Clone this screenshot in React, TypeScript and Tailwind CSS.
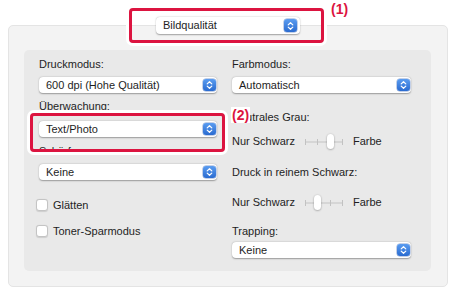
import React from 'react';

const red = 'border-[#dc1440]';

function Stepper({ big = false }: { big?: boolean }) {
  return (
    <div
      className={`flex items-center justify-center rounded-[3px] bg-gradient-to-b from-[#5a9cf0] to-[#2a6bd0] shadow-[0_0_0_0.5px_rgba(20,70,160,0.5)] ${
        big ? 'mr-[3px] h-[13px] w-[13px]' : 'mr-[1px] h-[12px] w-[13px]'
      }`}
    >
      <svg width="13" height="12" viewBox="0 0 13 12" fill="none">
        <path d="M4.2 4.9 L6.5 2.7 L8.8 4.9" stroke="white" strokeWidth="1.2" strokeLinecap="round" strokeLinejoin="round" />
        <path d="M4.2 7.1 L6.5 9.3 L8.8 7.1" stroke="white" strokeWidth="1.2" strokeLinecap="round" strokeLinejoin="round" />
      </svg>
    </div>
  );
}

function Popup({ value, className = '', big = false }: { value: string; className?: string; big?: boolean }) {
  return (
    <div
      className={`flex items-center justify-between rounded-[4px] bg-white pl-[7px] text-[11px] leading-[13px] text-[#1e1e1e] shadow-[0_0.5px_1.5px_rgba(0,0,0,0.35)] ${
        big ? 'h-[17px]' : 'h-[16px]'
      } ${className}`}
    >
      <span>{value}</span>
      <Stepper big={big} />
    </div>
  );
}

function Label({ text, className = '' }: { text: string; className?: string }) {
  return <div className={`text-[11px] leading-[13px] text-[#1e1e1e] ${className}`}>{text}</div>;
}

function Checkbox({ label, className = '' }: { label: string; className?: string }) {
  return (
    <div className={`flex h-[12px] items-center ${className}`}>
      <div className="ml-[-3px] h-[12px] w-[12px] rounded-[3px] border border-[#c4c4c4] bg-white shadow-[0_0.5px_1px_rgba(0,0,0,0.12)]" />
      <span className="ml-[5px] text-[11px] leading-[13px] text-[#1e1e1e]">{label}</span>
    </div>
  );
}

function Slider({ pos, className = '' }: { pos: number; className?: string }) {
  const ticks = [0, 12, 25, 37];
  return (
    <div className={`flex h-[15px] items-center ${className}`}>
      <span className="text-[11px] leading-[13px] text-[#1e1e1e]">Nur Schwarz</span>
      <div className="relative ml-[10px] h-[15px] w-[38px]">
        <div className="absolute left-0 right-0 top-[6.5px] h-[2px] bg-[#d6d6d6]" />
        {ticks.map((t) => (
          <div key={t} className="absolute top-[4.5px] h-[6px] w-px bg-[#c2c2c2]" style={{ left: t }} />
        ))}
        <div
          className="absolute top-0 h-[15px] w-[7px] rounded-full bg-white shadow-[0_0.5px_2px_rgba(0,0,0,0.4)]"
          style={{ left: ticks[pos] - 3 }}
        />
      </div>
      <span className="ml-[10px] text-[11px] leading-[13px] text-[#1e1e1e]">Farbe</span>
    </div>
  );
}

export default function App() {
  return (
    <div className="relative h-[301px] w-[452px] overflow-hidden bg-white pt-[25px] font-['Liberation_Sans',Arial,sans-serif]">
      {/* Outer panel */}
      <div className="ml-[8px] flex h-[262px] w-[440px] flex-col rounded-[5px] border border-[#e4e4e4] bg-[#f3f3f3]">
        <Popup value="Bildqualität" big className="-mt-[9px] w-[144px] self-center" />

        {/* Inner panel */}
        <div className="ml-[15px] mt-[16px] flex h-[221px] w-[407px] gap-[15px] rounded-[5px] bg-[#e9e9e9] pl-[15px] pr-[20px] pt-[8px]">
          <div className="flex w-[178px] flex-col">
            <Label text="Druckmodus:" />
            <Popup value="600 dpi (Hohe Qualität)" className="mt-[6px]" />
            <Label text="Überwachung:" className="mt-[7px]" />
            <Popup value="Text/Photo" className="mt-[8px]" />
            <Label text="Schärfe:" className="mt-[8px]" />
            <Popup value="Keine" className="mt-[6px]" />
            <Checkbox label="Glätten" className="mt-[19px]" />
            <Checkbox label="Toner-Sparmodus" className="mt-[14px]" />
          </div>
          <div className="flex w-[179px] flex-col">
            <Label text="Farbmodus:" />
            <Popup value="Automatisch" className="mt-[6px]" />
            <Label text="Neutrales Grau:" className="mt-[18px]" />
            <Slider pos={2} className="mt-[10px]" />
            <Label text="Druck in reinem Schwarz:" className="mt-[17px]" />
            <Slider pos={1} className="mt-[16px]" />
            <Label text="Trapping:" className="mt-[15px]" />
            <Popup value="Keine" className="mt-[4px]" />
          </div>
        </div>
      </div>

      {/* Annotations */}
      <div className={`absolute left-[129px] top-[8px] h-[35px] w-[195px] rounded-[4px] border-[3px] ${red} shadow-[0_0_0_3px_white]`} />
      <div className="absolute left-[331px] top-[1px] text-[14px] font-bold leading-[16px] text-[#dc1440]">(1)</div>
      <div className={`absolute left-[30px] top-[113px] h-[39px] w-[195px] rounded-[4px] border-[3px] ${red} shadow-[0_0_0_3px_white]`} />
      <div className="absolute left-[231px] top-[107px] bg-white px-px text-[14px] font-bold leading-[16px] text-[#dc1440]">(2)</div>
    </div>
  );
}
